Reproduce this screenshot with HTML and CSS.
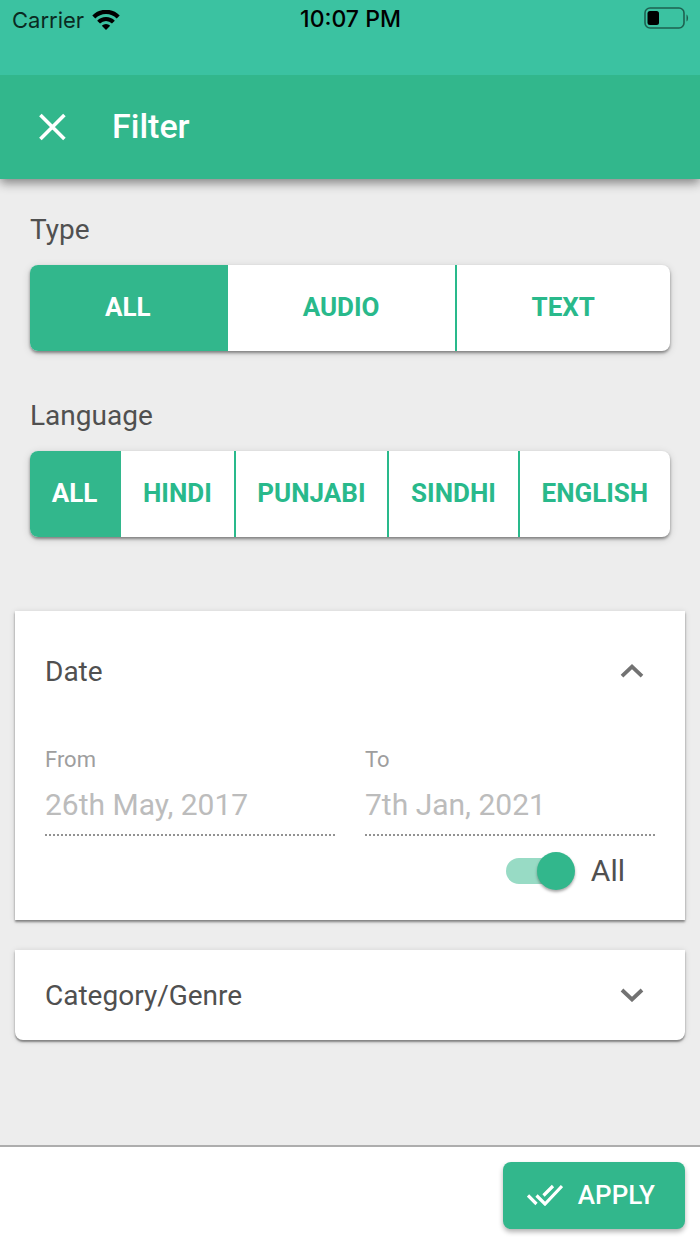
FILE: index.html
```html
<!DOCTYPE html>
<html lang="en">
<head>
  <meta charset="utf-8">
  <meta name="viewport" content="width=device-width, initial-scale=1">
  <title>Filter</title>
  <link rel="stylesheet" href="styles.css">
</head>
<body>
  <div class="screen">
    <div class="status-bar">
      <div class="status-left">
        <span>Carrier</span>
        <svg class="wifi" viewBox="0 0 28 20" aria-hidden="true">
          <path d="M1.8 7A17 17 0 0 1 26.2 7" fill="none" stroke="#000" stroke-width="4.2"/>
          <path d="M6.6 12.2A10.3 10.3 0 0 1 21.4 12.2" fill="none" stroke="#000" stroke-width="4"/>
          <path d="M14 20L9.8 15.8A6 6 0 0 1 18.2 15.8Z" fill="#000"/>
        </svg>
      </div>
      <time class="status-time">10:07 PM</time>
      <svg class="battery" viewBox="0 0 45 22" aria-hidden="true">
        <rect x="1" y="1" width="39" height="20" rx="5" fill="none" stroke="#000" stroke-opacity=".5" stroke-width="1.6"/>
        <rect x="3.5" y="4" width="11.5" height="14" rx="2.5" fill="#000"/>
        <path d="M42.5 7.5C44.6 8.5 44.6 13.5 42.5 14.5Z" fill="#000" fill-opacity=".5"/>
      </svg>
    </div>

    <header class="app-bar">
      <button class="close" type="button" aria-label="Close">
        <svg viewBox="0 0 28 28" aria-hidden="true"><path d="M2.4 2L26.4 26M26.4 2L2.4 26" fill="none" stroke="#fff" stroke-width="3.6"/></svg>
      </button>
      <h1 class="title">Filter</h1>
    </header>

    <main class="content">
      <section class="group">
        <h2 class="label" id="type-label">Type</h2>
        <div class="segments" role="group" aria-labelledby="type-label">
          <button class="segment active" type="button" aria-pressed="true">ALL</button>
          <button class="segment" type="button" aria-pressed="false">AUDIO</button>
          <button class="segment" type="button" aria-pressed="false">TEXT</button>
        </div>
      </section>

      <section class="group">
        <h2 class="label" id="language-label">Language</h2>
        <div class="segments" role="group" aria-labelledby="language-label">
          <button class="segment active" type="button" aria-pressed="true">ALL</button>
          <button class="segment" type="button" aria-pressed="false">HINDI</button>
          <button class="segment" type="button" aria-pressed="false">PUNJABI</button>
          <button class="segment" type="button" aria-pressed="false">SINDHI</button>
          <button class="segment" type="button" aria-pressed="false">ENGLISH</button>
        </div>
      </section>

      <div class="panels">
        <section class="panel">
          <button class="panel-header tall" type="button" aria-expanded="true">
            <span>Date</span>
            <svg class="chevron" viewBox="0 0 24 14" aria-hidden="true"><path d="M2 12.2L12 2.7L22 12.2" fill="none" stroke="#727272" stroke-width="3.8"/></svg>
          </button>
          <div class="panel-body">
            <div class="fields">
              <div class="field">
                <label for="from">From</label>
                <input id="from" type="text" value="26th May, 2017" disabled>
              </div>
              <div class="field">
                <label for="to">To</label>
                <input id="to" type="text" value="7th Jan, 2021" disabled>
              </div>
            </div>
            <label class="toggle">
              <input class="switch" type="checkbox" role="switch" checked>
              <span>All</span>
            </label>
          </div>
        </section>

        <section class="panel last">
          <button class="panel-header" type="button" aria-expanded="false">
            <span>Category/Genre</span>
            <svg class="chevron" viewBox="0 0 24 14" aria-hidden="true"><path d="M2 2L12 11.5L22 2" fill="none" stroke="#727272" stroke-width="3.8"/></svg>
          </button>
        </section>
      </div>
    </main>

    <footer class="footer">
      <button class="apply" type="button">
        <svg class="checks" viewBox="0 0 36 22" aria-hidden="true">
          <path d="M1 11.5L9.5 20M9.5 11.5L18 20L35 2M16.5 11.5L26 2" fill="none" stroke="#fff" stroke-width="3.2"/>
        </svg>
        <span>APPLY</span>
      </button>
    </footer>
  </div>
</body>
</html>
```
FILE: styles.css
```css
:root {
  --green: #32b78c;
  --green-light: #3bc2a1;
  --green-text: #29b98b;
  --text: #505050;
}

* {
  box-sizing: border-box;
}

body {
  margin: 0;
  background: #ededed;
  color: var(--text);
  font-family: Roboto, sans-serif;
  font-size: 28px;
}

button,
input {
  margin: 0;
  padding: 0;
  border: 0;
  background: none;
  color: inherit;
  font: inherit;
}

h1,
h2 {
  margin: 0;
}

svg {
  display: block;
}

.screen {
  display: flex;
  flex-direction: column;
  min-height: 100vh;
}

.status-bar {
  position: relative;
  z-index: 1;
  display: grid;
  grid-template-columns: 1fr auto 1fr;
  align-items: start;
  height: 75px;
  padding: 7px 11px 0 12px;
  background: var(--green-light);
  color: #000;
  font-family: Inter, sans-serif;
  font-size: 22px;
  line-height: 26px;
}

.status-left {
  display: flex;
  align-items: center;
  gap: 8px;
  color: #0a2a22;
}

.wifi {
  width: 28px;
  height: 20px;
}

.status-time {
  font-size: 23px;
  font-weight: 500;
  line-height: 24px;
}

.battery {
  justify-self: end;
  width: 45px;
  height: 22px;
}

.app-bar {
  display: flex;
  align-items: center;
  gap: 46px;
  height: 104px;
  padding: 0 38px;
  background: var(--green);
  color: #fff;
  box-shadow: 0 4px 10px rgba(0, 0, 0, .45);
}

.close svg {
  width: 28px;
  height: 28px;
}

.title {
  padding-bottom: 2px;
  font-size: 34px;
  font-weight: 500;
  line-height: 40px;
}

.content {
  flex: 1;
  padding: 35px 15px;
}

.group {
  margin-bottom: 49px;
  padding: 0 15px;
}

.label {
  margin-bottom: 19px;
  font-size: 28px;
  font-weight: 400;
  line-height: 32px;
}

.segments {
  display: flex;
  overflow: hidden;
  height: 86px;
  border-radius: 8px;
  background: #fff;
  box-shadow: 0 2px 3px rgba(0, 0, 0, .4), 0 2px 8px rgba(0, 0, 0, .14);
}

.segment {
  flex: 1 1 auto;
  padding-bottom: 2px;
  border-right: 2px solid var(--green-text);
  color: var(--green-text);
  font-size: 26px;
  font-weight: 700;
}

.segment:last-child {
  border-right: 0;
}

.segment.active {
  border-color: var(--green);
  background: var(--green);
  color: #fff;
}

.panels {
  display: grid;
  gap: 30px;
  margin-top: 74px;
}

.panel {
  background: #fff;
  box-shadow: 0 2px 2px rgba(0, 0, 0, .4), 0 1px 6px rgba(0, 0, 0, .14);
}

.panel.last {
  border-radius: 0 0 8px 8px;
}

.panel-header {
  display: flex;
  align-items: center;
  justify-content: space-between;
  width: 100%;
  height: 90px;
  padding: 0 41px 0 30px;
}

.panel-header.tall {
  height: 120px;
}

.chevron {
  width: 24px;
  height: 14px;
}

.panel-body {
  padding: 15px 30px 30px;
}

.fields {
  display: grid;
  grid-template-columns: 1fr 1fr;
  gap: 30px;
}

.field {
  display: flex;
  flex-direction: column;
}

.field label {
  color: #9e9e9e;
  font-size: 22px;
  line-height: 28px;
}

.field input {
  width: 100%;
  height: 62px;
  border-bottom: 2px dotted #929292;
  color: #bcbcbc;
  font-size: 30px;
}

.toggle {
  display: flex;
  align-items: center;
  justify-content: flex-end;
  gap: 16px;
  margin-top: 16px;
  padding-right: 30px;
  font-size: 30px;
  line-height: 38px;
}

.switch {
  position: relative;
  display: flex;
  align-items: center;
  width: 69px;
  height: 38px;
  appearance: none;
}

.switch::before {
  width: 62px;
  height: 26px;
  border-radius: 13px;
  background: #98dbc5;
  content: "";
}

.switch::after {
  position: absolute;
  right: 0;
  width: 38px;
  height: 38px;
  border-radius: 50%;
  background: var(--green);
  box-shadow: 0 2px 3px rgba(0, 0, 0, .35);
  content: "";
}

.footer {
  display: flex;
  justify-content: flex-end;
  padding: 15px;
  border-top: 2px solid #adadad;
  background: #fff;
}

.apply {
  display: flex;
  align-items: center;
  gap: 15px;
  height: 67px;
  padding: 0 30px 2px 24px;
  border-radius: 8px;
  background: var(--green);
  color: #fff;
  font-size: 26px;
  font-weight: 500;
  box-shadow: 0 3px 5px rgba(0, 0, 0, .3);
}

.checks {
  width: 36px;
  height: 22px;
}
```
